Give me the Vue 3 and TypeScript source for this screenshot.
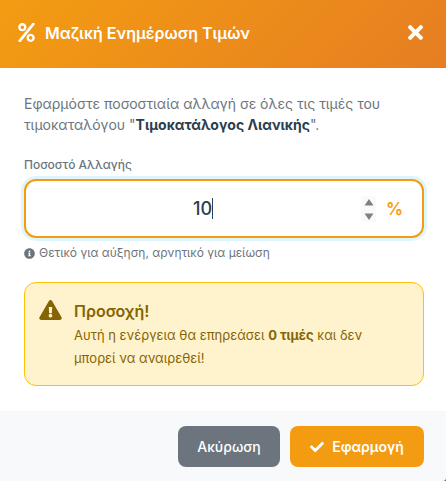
<script setup lang="ts">
const value = '10'
</script>

<template>
  <div class="modal">
    <header class="head">
      <h2 class="title">
        <svg class="pct-icon" viewBox="0 0 448 512" aria-hidden="true"><path fill="currentColor" d="M112 224c61.900 0 112-50.100 112-112S173.900 0 112 0 0 50.100 0 112s50.100 112 112 112zm0-160c26.500 0 48 21.500 48 48s-21.500 48-48 48-48-21.500-48-48 21.500-48 48-48zm224 224c-61.900 0-112 50.100-112 112s50.100 112 112 112 112-50.100 112-112-50.100-112-112-112zm0 160c-26.500 0-48-21.500-48-48s21.500-48 48-48 48 21.500 48 48-21.500 48-48 48zM392.300.2l31.600-.1c19.400-.1 30.900 21.800 19.700 37.800L77.400 501.600a23.950 23.950 0 0 1-19.600 10.200l-33.400.1c-19.500 0-30.900-21.900-19.700-37.800l368-463.700C377.200 4.600 384.500.2 392.300.2z"/></svg>
        Μαζική Ενημέρωση Τιμών
      </h2>
      <svg class="close" viewBox="0 80 352 352" aria-hidden="true"><path fill="currentColor" d="M242.720 256l100.070-100.070c12.280-12.280 12.280-32.190 0-44.480l-22.240-22.240c-12.280-12.280-32.190-12.280-44.480 0L176 189.280 75.930 89.210c-12.280-12.280-32.190-12.280-44.480 0L9.210 111.450c-12.280 12.280-12.280 32.190 0 44.480L109.280 256 9.210 356.070c-12.280 12.280-12.280 32.190 0 44.480l22.240 22.240c12.280 12.280 32.200 12.280 44.480 0L176 322.720l100.070 100.070c12.280 12.280 32.200 12.280 44.480 0l22.240-22.240c12.280-12.280 12.280-32.190 0-44.480L242.720 256z"/></svg>
    </header>
    <main class="body">
      <p class="intro">Εφαρμόστε ποσοστιαία αλλαγή σε όλες τις τιμές του τιμοκαταλόγου "<strong>Τιμοκατάλογος Λιανικής</strong>".</p>
      <label class="label">Ποσοστό Αλλαγής</label>
      <div class="field">
        <div class="value"><span>{{ value }}</span><i class="caret"></i></div>
        <div class="spin">
          <svg viewBox="0 0 10 26" aria-hidden="true"><path d="M5 3l4.500 6.500H.5zM5 24l-4.500-6.500h9z" fill="#808080"/></svg>
        </div>
        <span class="unit">%</span>
      </div>
      <p class="hint">
        <svg viewBox="0 0 512 512" aria-hidden="true"><path fill="currentColor" d="M256 8C119 8 8 119.100 8 256c0 137 111 248 248 248s248-111 248-248C504 119.100 393 8 256 8zm0 110c23.200 0 42 18.800 42 42s-18.800 42-42 42-42-18.800-42-42 18.800-42 42-42zm56 254c0 6.600-5.400 12-12 12h-88c-6.600 0-12-5.400-12-12v-24c0-6.600 5.400-12 12-12h12v-64h-12c-6.600 0-12-5.400-12-12v-24c0-6.600 5.400-12 12-12h64c6.600 0 12 5.400 12 12v100h12c6.600 0 12 5.400 12 12v24z"/></svg>
        Θετικό για αύξηση, αρνητικό για μείωση
      </p>
      <section class="alert">
        <svg class="warn" viewBox="0 0 576 512" aria-hidden="true"><path fill="currentColor" d="M569.517 440.013C587.975 472.007 564.806 512 527.940 512H48.054c-36.937 0-59.999-40.055-41.577-71.987L246.423 24.035c18.467-32.009 64.720-31.951 83.154 0l239.940 416.978zM288 354c-25.405 0-46 20.595-46 46s20.595 46 46 46 46-20.595 46-46-20.595-46-46-46zm-43.673-165.346l7.418 136c.347 6.364 5.609 11.346 11.982 11.346h48.546c6.373 0 11.635-4.982 11.982-11.346l7.418-136c.375-6.874-5.098-12.654-11.982-12.654h-63.383c-6.884 0-12.356 5.780-11.981 12.654z"/></svg>
        <div>
          <h3 class="alert-title">Προσοχή!</h3>
          <p class="alert-text">Αυτή η ενέργεια θα επηρεάσει <strong>0 τιμές</strong> και δεν μπορεί να αναιρεθεί!</p>
        </div>
      </section>
    </main>
    <footer class="foot">
      <button class="btn cancel" type="button">Ακύρωση</button>
      <button class="btn apply" type="button">
        <svg viewBox="0 0 512 512" aria-hidden="true"><path fill="currentColor" d="M173.898 439.404l-166.400-166.400c-9.997-9.997-9.997-26.206 0-36.204l36.203-36.204c9.997-9.998 26.207-9.998 36.204 0L192 312.690 432.095 72.596c9.997-9.997 26.207-9.997 36.204 0l36.203 36.204c9.997 9.997 9.997 26.206 0 36.204l-294.400 294.401c-9.998 9.997-26.207 9.997-36.204-.001z"/></svg>
        Εφαρμογή
      </button>
    </footer>
  </div>
</template>

<style>
html, body { margin: 0; background: #6b6b6b; }
</style>

<style scoped>
.modal {
  width: 446px;
  height: 481px;
  display: flex;
  flex-direction: column;
  background: #fff;
  font-family: Inter, "Noto Sans", sans-serif;
  overflow: hidden;
  border-bottom-right-radius: 4px;
}
.head {
  height: 68px;
  flex: none;
  box-sizing: border-box;
  padding: 0 23px 3px 18px;
  display: flex;
  align-items: center;
  justify-content: space-between;
  color: #fff;
  background: linear-gradient(135deg, #f39c12, #e67e22);
}
.title {
  margin: 0;
  display: flex;
  align-items: center;
  gap: 10px;
  font-size: 16px;
  font-weight: 600;
  line-height: 24px;
}
.pct-icon { width: 17px; height: 19px; }
.close { width: 15px; height: 15px; }
.body {
  flex: 1;
  padding: 25px 22px 0 24px;
}
.intro {
  margin: 0 0 21px;
  font-size: 14px;
  line-height: 21px;
  color: #6c757d;
}
.intro strong { color: #2c3e50; font-weight: 700; }
.label {
  display: block;
  font-size: 12px;
  font-weight: 500;
  line-height: 18px;
  color: #6c757d;
  margin-bottom: 5px;
}
.field {
  height: 59px;
  box-sizing: border-box;
  border: 2px solid #f39c12;
  border-radius: 12px;
  box-shadow: 0 0 0 3px #e0f5fb;
  display: flex;
  align-items: center;
  padding: 0 10px 0 16px;
  background: #fff;
}
.value {
  flex: 1;
  display: flex;
  justify-content: center;
  align-items: center;
  font-size: 18px;
  font-weight: 500;
  color: #2c3e50;
  padding-left: 3px;
}
.caret { width: 1px; height: 21px; background: #2c3e50; }
.spin { width: 15px; height: 26px; display: flex; justify-content: center; background: #fafafa; margin-right: 10px; }
.spin svg { width: 10px; height: 26px; }
.unit { font-size: 17px; font-weight: 600; color: #f39c12; width: 16px; margin-right: 10px; }
.hint {
  margin: 6px 0 0;
  display: flex;
  align-items: center;
  gap: 4px;
  font-size: 12px;
  line-height: 18px;
  color: #6c757d;
}
.hint svg { width: 11px; height: 11px; }
.alert {
  margin-top: 20px;
  height: 104px;
  box-sizing: border-box;
  border: 1px solid #ffc107;
  border-radius: 12px;
  background: #fff3cd;
  padding: 16px 20px 16px 14px;
  display: flex;
  gap: 12px;
  color: #856404;
}
.warn { width: 23px; height: 20px; flex: none; margin-top: 1px; }
.alert-title { margin: 0 0 1px; font-size: 16px; font-weight: 600; line-height: 24px; }
.alert-text { margin: 0; font-size: 13px; line-height: 23.4px; }
.alert-text strong { font-weight: 700; }
.foot {
  height: 70px;
  flex: none;
  box-sizing: border-box;
  background: #f8f9fa;
  display: flex;
  justify-content: flex-end;
  align-items: flex-start;
  gap: 10px;
  padding: 15px 22px 0;
}
.btn {
  height: 41px;
  border: none;
  border-radius: 8px;
  color: #fff;
  font-family: inherit;
  font-size: 14px;
  font-weight: 500;
  display: flex;
  align-items: center;
  justify-content: center;
}
.cancel { width: 102px; background: #6c757d; }
.apply { width: 134px; background: #f39c12; gap: 8px; font-weight: 600; }
.apply svg { width: 14px; height: 14px; }
</style>
